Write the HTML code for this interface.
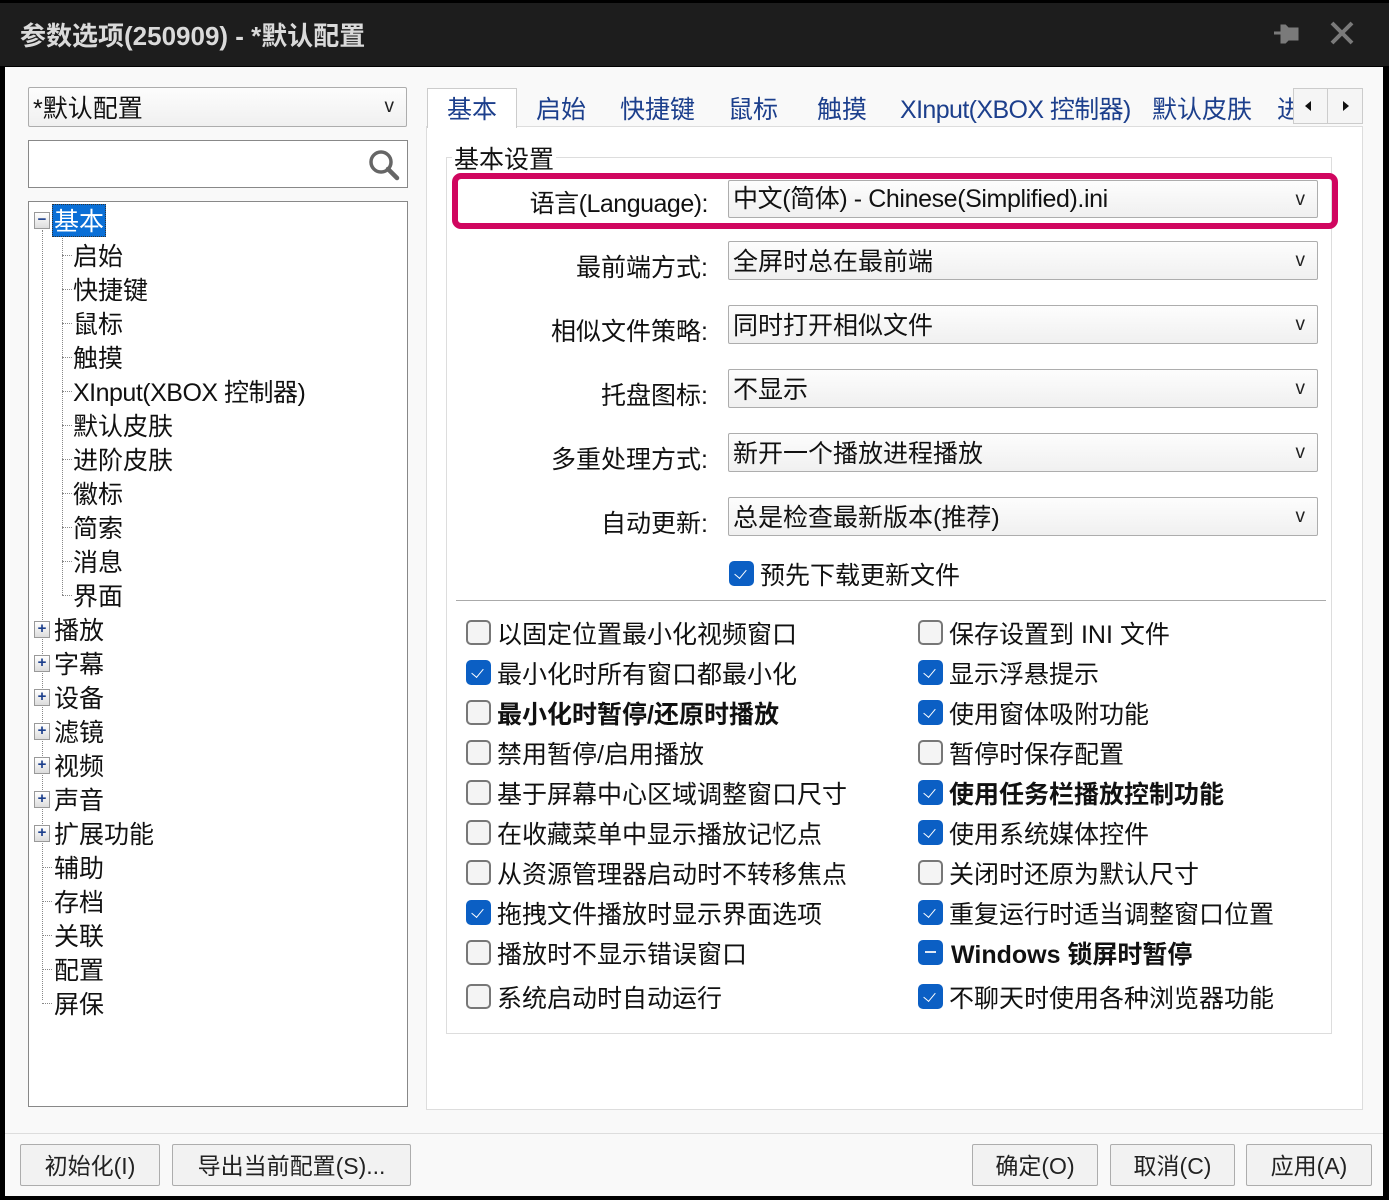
<!DOCTYPE html>
<html><head><meta charset="utf-8"><style>
*{margin:0;padding:0;box-sizing:border-box}
body{width:1389px;height:1200px;background:#000;position:relative;overflow:hidden;font-family:"Liberation Sans","Noto Sans CJK SC",sans-serif;color:#111}
.a{position:absolute}
.tx{position:absolute;font-size:25px;line-height:34px;white-space:nowrap;margin-top:2px}
.combo{position:absolute;background:linear-gradient(#fdfdfd,#f0f0f0);border:1px solid #adadad;border-radius:2px}
.combo .v{position:absolute;right:12px;top:0;font-size:19px;line-height:38px;color:#222}
.cb{position:absolute;width:25px;height:25px;border-radius:5px}
.off{border:2px solid #777;background:#f4f4f4}
.on{background:#0b5fc4}
.on::after{content:"";position:absolute;left:8px;top:6px;width:6px;height:10px;border:solid #fff;border-width:0 1.5px 1.5px 0;transform:rotate(40deg)}
.ind{background:#0b5fc4}
.ind::after{content:"";position:absolute;left:7px;top:11px;width:11px;height:2px;background:#dfe8f5}
.btn{position:absolute;top:1144px;height:42px;background:#f2f2f2;border:1px solid #adadad;border-radius:2px;font-size:23px;line-height:42px;text-align:center;color:#222}
.pm{position:absolute;width:16px;height:17px;border:1px solid #999;background:linear-gradient(#fff,#ddd);font-size:15px;line-height:14px;text-align:center;color:#1c3f8c;font-weight:bold}
.tab{position:absolute;top:92px;font-size:25px;line-height:36px;color:#1c3f8c;white-space:nowrap}
.lbl{position:absolute;right:681px;font-size:25px;line-height:34px;white-space:nowrap;margin-top:2px}
</style></head><body>
<div class="a" style="left:0;top:3px;width:1389px;height:63px;background:#1d1d1d"></div>
<div class="tx" style="left:20px;top:17px;font-size:26px;color:#dadada;font-weight:bold;line-height:34px">参数选项(250909) - *默认配置</div>
<svg class="a" style="left:1272px;top:20px" width="30" height="26"><path d="M2 13h8 M10 6h3l3 3h9v10h-9l-3 3h-3z" fill="#7a7a7a" stroke="#7a7a7a" stroke-width="3"/></svg>
<svg class="a" style="left:1328px;top:20px" width="28" height="26"><path d="M4 3L24 23M24 3L4 23" stroke="#7a7a7a" stroke-width="4"/></svg>
<div class="a" style="left:5px;top:67px;width:1378px;height:1129px;background:#f9f9f9"></div>
<div class="combo" style="left:28px;top:87px;width:379px;height:40px"><div class="tx" style="left:4px;top:2px">*默认配置</div><div class="v">v</div></div>
<div class="a" style="left:28px;top:140px;width:380px;height:48px;background:#fff;border:1px solid #888"></div>
<svg class="a" style="left:366px;top:147px" width="34" height="34"><circle cx="15" cy="15" r="10" fill="none" stroke="#666" stroke-width="3.5"/><path d="M22 22L31 31" stroke="#666" stroke-width="4.5" stroke-linecap="round"/></svg>
<div class="a" style="left:28px;top:201px;width:380px;height:906px;background:#fff;border:1px solid #888"></div>
<div class="a" style="left:42px;top:230px;height:770px;border-left:1px dotted #888"></div>
<div class="a" style="left:62px;top:234px;height:361px;border-left:1px dotted #888"></div>
<div class="a" style="left:62px;top:255px;width:10px;border-top:1px dotted #888"></div>
<div class="a" style="left:62px;top:289px;width:10px;border-top:1px dotted #888"></div>
<div class="a" style="left:62px;top:323px;width:10px;border-top:1px dotted #888"></div>
<div class="a" style="left:62px;top:357px;width:10px;border-top:1px dotted #888"></div>
<div class="a" style="left:62px;top:391px;width:10px;border-top:1px dotted #888"></div>
<div class="a" style="left:62px;top:425px;width:10px;border-top:1px dotted #888"></div>
<div class="a" style="left:62px;top:459px;width:10px;border-top:1px dotted #888"></div>
<div class="a" style="left:62px;top:493px;width:10px;border-top:1px dotted #888"></div>
<div class="a" style="left:62px;top:527px;width:10px;border-top:1px dotted #888"></div>
<div class="a" style="left:62px;top:561px;width:10px;border-top:1px dotted #888"></div>
<div class="a" style="left:62px;top:595px;width:10px;border-top:1px dotted #888"></div>
<div class="a" style="left:42px;top:867px;width:10px;border-top:1px dotted #888"></div>
<div class="a" style="left:42px;top:901px;width:10px;border-top:1px dotted #888"></div>
<div class="a" style="left:42px;top:935px;width:10px;border-top:1px dotted #888"></div>
<div class="a" style="left:42px;top:969px;width:10px;border-top:1px dotted #888"></div>
<div class="a" style="left:42px;top:1003px;width:10px;border-top:1px dotted #888"></div>
<div class="pm" style="left:34px;top:212px">−</div>
<div class="a" style="left:52px;top:204px;width:54px;height:33px;background:#0a6fd6;border:1px dotted #333"></div>
<div class="tx" style="left:54px;top:203px;color:#fff">基本</div>
<div class="tx" style="left:73px;top:238px">启始</div>
<div class="tx" style="left:73px;top:272px">快捷键</div>
<div class="tx" style="left:73px;top:306px">鼠标</div>
<div class="tx" style="left:73px;top:340px">触摸</div>
<div class="tx" style="left:73px;top:374px;letter-spacing:-0.5px">XInput(XBOX 控制器)</div>
<div class="tx" style="left:73px;top:408px">默认皮肤</div>
<div class="tx" style="left:73px;top:442px">进阶皮肤</div>
<div class="tx" style="left:73px;top:476px">徽标</div>
<div class="tx" style="left:73px;top:510px">简索</div>
<div class="tx" style="left:73px;top:544px">消息</div>
<div class="tx" style="left:73px;top:578px">界面</div>
<div class="pm" style="left:34px;top:621px">+</div><div class="tx" style="left:54px;top:612px">播放</div>
<div class="pm" style="left:34px;top:655px">+</div><div class="tx" style="left:54px;top:646px">字幕</div>
<div class="pm" style="left:34px;top:689px">+</div><div class="tx" style="left:54px;top:680px">设备</div>
<div class="pm" style="left:34px;top:723px">+</div><div class="tx" style="left:54px;top:714px">滤镜</div>
<div class="pm" style="left:34px;top:757px">+</div><div class="tx" style="left:54px;top:748px">视频</div>
<div class="pm" style="left:34px;top:791px">+</div><div class="tx" style="left:54px;top:782px">声音</div>
<div class="pm" style="left:34px;top:825px">+</div><div class="tx" style="left:54px;top:816px">扩展功能</div>
<div class="tx" style="left:54px;top:850px">辅助</div>
<div class="tx" style="left:54px;top:884px">存档</div>
<div class="tx" style="left:54px;top:918px">关联</div>
<div class="tx" style="left:54px;top:952px">配置</div>
<div class="tx" style="left:54px;top:986px">屏保</div>
<div class="a" style="left:426px;top:126px;width:937px;height:984px;background:#fff;border:1px solid #ddd"></div>
<div class="a" style="left:427px;top:88px;width:90px;height:40px;background:#fff;border:1px solid #ccc;border-bottom:none"></div>
<div class="tab" style="left:447px">基本</div>
<div class="tab" style="left:536px">启始</div>
<div class="tab" style="left:620px">快捷键</div>
<div class="tab" style="left:728px">鼠标</div>
<div class="tab" style="left:817px">触摸</div>
<div class="tab" style="left:900px;letter-spacing:-0.6px">XInput(XBOX 控制器)</div>
<div class="tab" style="left:1152px">默认皮肤</div>
<div class="a" style="left:1277px;top:90px;width:16px;height:38px;overflow:hidden"><div class="tab" style="left:0;top:2px">进</div></div>
<div class="a" style="left:1293px;top:88px;width:70px;height:36px;background:#f5f5f5;border:1px solid #ccc"></div>
<div class="a" style="left:1327px;top:88px;width:1px;height:36px;background:#ccc"></div>
<div class="a" style="left:1305px;top:101px;border:5px solid transparent;border-right:6px solid #111;border-left:none"></div>
<div class="a" style="left:1343px;top:101px;border:5px solid transparent;border-left:6px solid #111;border-right:none"></div>
<div class="a" style="left:446px;top:157px;width:886px;height:877px;border:1px solid #ddd"></div>
<div class="a" style="left:452px;top:147px;width:104px;height:24px;background:#fff"></div>
<div class="tx" style="left:454px;top:141px">基本设置</div>
<div class="a" style="left:452px;top:173px;width:886px;height:56px;border:6px solid #d0065f;border-radius:9px"></div>
<div class="lbl" style="top:185px;letter-spacing:-0.5px">语言(Language):</div>
<div class="combo" style="left:728px;top:180px;width:590px;height:38px"><div class="tx" style="left:4px;top:-1px;letter-spacing:-0.4px">中文(简体) - Chinese(Simplified).ini</div><div class="v">v</div></div>
<div class="lbl" style="top:249px">最前端方式:</div>
<div class="combo" style="left:728px;top:241px;width:590px;height:39px"><div class="tx" style="left:4px;top:1px">全屏时总在最前端</div><div class="v">v</div></div>
<div class="lbl" style="top:313px">相似文件策略:</div>
<div class="combo" style="left:728px;top:305px;width:590px;height:39px"><div class="tx" style="left:4px;top:1px">同时打开相似文件</div><div class="v">v</div></div>
<div class="lbl" style="top:377px">托盘图标:</div>
<div class="combo" style="left:728px;top:369px;width:590px;height:39px"><div class="tx" style="left:4px;top:1px">不显示</div><div class="v">v</div></div>
<div class="lbl" style="top:441px">多重处理方式:</div>
<div class="combo" style="left:728px;top:433px;width:590px;height:39px"><div class="tx" style="left:4px;top:1px">新开一个播放进程播放</div><div class="v">v</div></div>
<div class="lbl" style="top:505px">自动更新:</div>
<div class="combo" style="left:728px;top:497px;width:590px;height:39px"><div class="tx" style="left:4px;top:1px">总是检查最新版本(推荐)</div><div class="v">v</div></div>
<div class="cb on" style="left:729px;top:561px"></div><div class="tx" style="left:760px;top:557px">预先下载更新文件</div>
<div class="a" style="left:456px;top:600px;width:870px;height:1px;background:#aaa"></div>
<div class="cb off" style="left:466px;top:620px"></div><div class="tx" style="left:497px;top:616px">以固定位置最小化视频窗口</div>
<div class="cb on" style="left:466px;top:660px"></div><div class="tx" style="left:497px;top:656px">最小化时所有窗口都最小化</div>
<div class="cb off" style="left:466px;top:700px"></div><div class="tx" style="left:497px;top:696px;font-weight:bold">最小化时暂停/还原时播放</div>
<div class="cb off" style="left:466px;top:740px"></div><div class="tx" style="left:497px;top:736px">禁用暂停/启用播放</div>
<div class="cb off" style="left:466px;top:780px"></div><div class="tx" style="left:497px;top:776px">基于屏幕中心区域调整窗口尺寸</div>
<div class="cb off" style="left:466px;top:820px"></div><div class="tx" style="left:497px;top:816px">在收藏菜单中显示播放记忆点</div>
<div class="cb off" style="left:466px;top:860px"></div><div class="tx" style="left:497px;top:856px">从资源管理器启动时不转移焦点</div>
<div class="cb on" style="left:466px;top:900px"></div><div class="tx" style="left:497px;top:896px">拖拽文件播放时显示界面选项</div>
<div class="cb off" style="left:466px;top:940px"></div><div class="tx" style="left:497px;top:936px">播放时不显示错误窗口</div>
<div class="cb off" style="left:466px;top:984px"></div><div class="tx" style="left:497px;top:980px">系统启动时自动运行</div>
<div class="cb off" style="left:918px;top:620px"></div><div class="tx" style="left:949px;top:616px">保存设置到 INI 文件</div>
<div class="cb on" style="left:918px;top:660px"></div><div class="tx" style="left:949px;top:656px">显示浮悬提示</div>
<div class="cb on" style="left:918px;top:700px"></div><div class="tx" style="left:949px;top:696px">使用窗体吸附功能</div>
<div class="cb off" style="left:918px;top:740px"></div><div class="tx" style="left:949px;top:736px">暂停时保存配置</div>
<div class="cb on" style="left:918px;top:780px"></div><div class="tx" style="left:949px;top:776px;font-weight:bold">使用任务栏播放控制功能</div>
<div class="cb on" style="left:918px;top:820px"></div><div class="tx" style="left:949px;top:816px">使用系统媒体控件</div>
<div class="cb off" style="left:918px;top:860px"></div><div class="tx" style="left:949px;top:856px">关闭时还原为默认尺寸</div>
<div class="cb on" style="left:918px;top:900px"></div><div class="tx" style="left:949px;top:896px">重复运行时适当调整窗口位置</div>
<div class="cb ind" style="left:918px;top:940px"></div><div class="tx" style="left:951px;top:936px;font-weight:bold">Windows 锁屏时暂停</div>
<div class="cb on" style="left:918px;top:984px"></div><div class="tx" style="left:949px;top:980px">不聊天时使用各种浏览器功能</div>
<div class="a" style="left:5px;top:1133px;width:1378px;height:1px;background:#ddd"></div>
<div class="btn" style="left:20px;width:140px">初始化(I)</div>
<div class="btn" style="left:172px;width:239px">导出当前配置(S)...</div>
<div class="btn" style="left:972px;width:126px">确定(O)</div>
<div class="btn" style="left:1110px;width:125px">取消(C)</div>
<div class="btn" style="left:1246px;width:126px">应用(A)</div>
</body></html>
